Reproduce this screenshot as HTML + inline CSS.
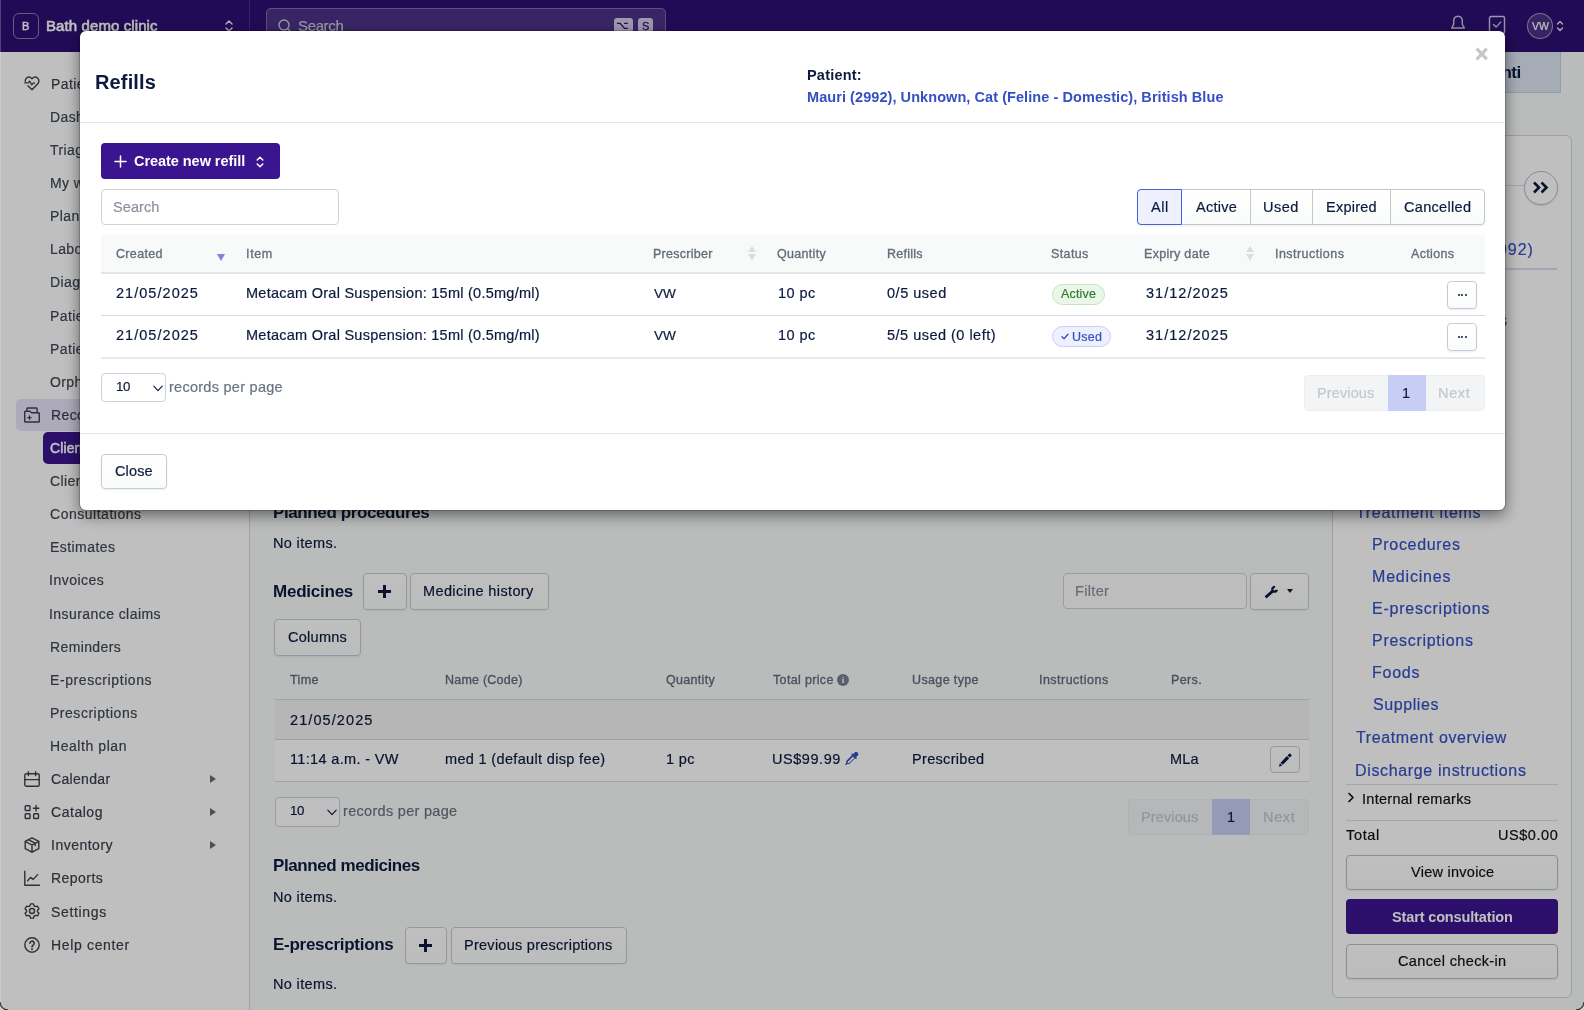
<!DOCTYPE html>
<html lang="en">
<head>
<meta charset="utf-8">
<title>Refills</title>
<style>
*{box-sizing:border-box;margin:0;padding:0}
html,body{width:1584px;height:1010px;overflow:hidden;background:#fff}
body{font-family:"Liberation Sans",sans-serif;font-size:14.5px;color:#0c1a3d;position:relative}
.abs{position:absolute}
.t{position:absolute;white-space:nowrap;line-height:20px;will-change:transform}
svg{display:block}
/* top bar */
#topbar{left:0;top:0;width:1584px;height:52px;background:#2d0f74}
#tb-div{left:249px;top:0;width:1px;height:52px;background:rgba(255,255,255,.14)}
#badgeB{left:13px;top:13px;width:26px;height:26px;border:1px solid rgba(255,255,255,.45);border-radius:6px;color:#fff;font-weight:700;font-size:11px;text-align:center;line-height:23.5px}
#searchbox{left:266px;top:8px;width:400px;height:36px;border:1px solid rgba(255,255,255,.28);border-radius:5px;background:rgba(255,255,255,.15)}
.kbd{top:18px;height:15px;background:#d5cbec;border-radius:3px;color:#301078;font-size:11px;font-weight:700;text-align:center;line-height:15px}
#avatar{left:1527px;top:13px;width:26px;height:26px;border-radius:50%;border:1px solid rgba(255,255,255,.5);background:rgba(255,255,255,.14);color:#fff;font-size:11px;text-align:center;line-height:24px;letter-spacing:.2px}
/* sidebar */
#sidebar{left:0;top:52px;width:250px;height:958px;background:#fff;border-right:1px solid #d4d7de}
.sb{color:#3f4853}
.sbi{left:24px;width:16px;height:16px;color:#3a434e;overflow:visible}
.arrow{left:209.500px;width:0;height:0;border-left:6.500px solid #636c79;border-top:4px solid transparent;border-bottom:4px solid transparent}
/* main */
#main{left:250px;top:52px;width:1334px;height:958px;background:#f9fbfb}
.h{font-weight:700;font-size:17px;color:#0c1a3d}
.btn{position:absolute;border:1px solid #c6ccd6;border-radius:4px;background:linear-gradient(#fff,#fafbfb);box-shadow:0 1px 2px rgba(12,26,61,.08);height:36.5px;text-align:center;line-height:34px;font-size:14.5px;color:#0c1a3d;white-space:nowrap}
.th{color:#636d7a;font-size:12.5px}
.lnk{color:#3550c3}
.inp{position:absolute;border:1px solid #cdd2da;border-radius:4px;background:#fff;height:36px}
.ph{color:#8a919c}
/* overlay */
#overlay{left:0;top:0;width:1584px;height:1010px;background:rgba(0,0,0,.25)}
/* modal */
#modal{left:80px;top:31px;width:1425px;height:478.5px;background:#fff;border-radius:6px;box-shadow:0 0 0 1px rgba(0,0,0,.18),0 5px 15px rgba(0,0,0,.5)}
.hr{position:absolute;height:1px;background:#e3e5e9}
.mth{color:#6a737f;font-size:12.5px;font-weight:700;top:243px}
.td{font-size:14.5px;color:#0c1a3d}
.num{letter-spacing:.9px}
.seg{position:absolute;top:0;height:36px;border:1px solid #c2c7d0;border-left:none;background:linear-gradient(#fff,#fafbfb);text-align:center;line-height:34px;font-size:14.5px;color:#0c1a3d}
.pill{position:absolute;height:21px;border-radius:11px;font-size:12.5px;line-height:19px;text-align:center;border:1px solid}
.pg{position:absolute;top:0;height:36px;line-height:36px;text-align:center;font-size:14.5px}
</style>
</head>
<body>
<div id="page" class="abs" style="left:0;top:0;width:1584px;height:1010px">
<div id="topbar" class="abs"></div>
<div id="tb-div" class="abs"></div>
<div id="badgeB" class="abs"></div>
<div class="t " style="left:22.32px;top:16.20px;font-size:11px;-webkit-text-stroke:0.45px currentColor;color:#fff">B</div>
<div class="t " style="left:45.50px;top:15.80px;font-size:15px;-webkit-text-stroke:0.6px currentColor;letter-spacing:0.097px;color:#fff">Bath demo clinic</div>
<svg class="abs" style="left:224px;top:18px" width="10" height="16" viewBox="0 0 10 16" fill="none" stroke="#e9e6f2" stroke-width="1.500" stroke-linecap="round" stroke-linejoin="round"><path d="M2 6l3-3 3 3M2 10l3 3 3-3"/></svg>
<div id="searchbox" class="abs"></div>
<svg class="abs" style="left:277px;top:18px" width="16" height="16" viewBox="0 0 16 16" fill="none" stroke="#cfc9e0" stroke-width="1.400" stroke-linecap="round"><circle cx="7" cy="7" r="5"/><path d="M10.800 10.800L14 14"/></svg>
<div class="t " style="left:298.32px;top:15.80px;font-size:15px;-webkit-text-stroke:.2px currentColor;letter-spacing:-0.360px;color:#cfc9e0">Search</div>
<div class="kbd abs" style="left:614px;width:19px"></div>
<div class="t " style="left:616.40px;top:16.00px;font-size:11px;font-weight:700;color:#2d0f74;font-family:'DejaVu Sans',sans-serif">⌥</div>
<div class="kbd abs" style="left:638px;width:15px"></div>
<div class="t " style="left:641.71px;top:16.00px;font-size:11px;-webkit-text-stroke:0.3px currentColor;color:#2d0f74">S</div>
<svg class="abs" style="left:1449px;top:14px" width="18" height="20" viewBox="0 0 18 20" fill="none" stroke="#cfc9e0" stroke-width="1.400" stroke-linejoin="round"><path d="M9 2.200c-2.600 0-4.300 2-4.300 4.600v3.600L2.600 14h12.800l-2.100-3.600V6.800c0-2.600-1.700-4.600-4.300-4.600z"/></svg>
<svg class="abs" style="left:1488px;top:15px" width="18" height="20" viewBox="0 0 18 20" fill="none" stroke="#cfc9e0" stroke-width="1.400" stroke-linejoin="round" stroke-linecap="round"><rect x="1.500" y="1.500" width="15" height="17" rx="1.500"/><path d="M5.500 9.500l2.600 2.600 4.600-5"/></svg>
<div id="avatar" class="abs"></div>
<div class="t " style="left:1531.70px;top:15.80px;font-size:10.5px;-webkit-text-stroke:.2px currentColor;letter-spacing:-0.105px;color:#fff">VW</div>
<svg class="abs" style="left:1556px;top:18px" width="8" height="16" viewBox="0 0 8 16" fill="none" stroke="#e9e6f2" stroke-width="1.400" stroke-linecap="round" stroke-linejoin="round"><path d="M1.500 6L4 3.500 6.500 6M1.500 10L4 12.500 6.500 10"/></svg>

<div id="sidebar" class="abs"></div>
<div class="abs" style="left:16px;top:399px;width:217px;height:32px;border-radius:5px;background:#e9e2fa"></div>
<div class="abs" style="left:42.500px;top:432px;width:190.500px;height:32px;border-radius:5px;background:#3b158f"></div>
<div class="t sb" style="left:50.68px;top:73.70px;font-size:14px;-webkit-text-stroke:.2px currentColor;letter-spacing:.4px;color:#3a414c">Patients</div>
<svg class="abs sbi" style="top:75.5px" viewBox="0 0 16 16" fill="none" stroke="currentColor" stroke-width="1.400" stroke-linecap="round" stroke-linejoin="round"><path d="M1.300 5.400C1.100 4.300 1.500 3.100 2.300 2.300 3.900.800 6.300.900 8 2.700 9.700.900 12.100.800 13.700 2.300c1.600 1.500 1.600 4.100-.1 5.800L8 13.800 3.900 9.700"/><path d="M.8 6.900h3.400l1.400-1.700 2.200 3.600 1.300-1.600h1.500" stroke-width="1.300"/></svg>
<div class="t sb" style="left:49.58px;top:106.81px;font-size:14px;-webkit-text-stroke:.2px currentColor;letter-spacing:.4px">Dashboard</div>
<div class="t sb" style="left:50.42px;top:139.93px;font-size:14px;-webkit-text-stroke:.2px currentColor;letter-spacing:.4px">Triage</div>
<div class="t sb" style="left:49.58px;top:173.05px;font-size:14px;-webkit-text-stroke:.2px currentColor;letter-spacing:.4px">My work</div>
<div class="t sb" style="left:49.58px;top:206.16px;font-size:14px;-webkit-text-stroke:.2px currentColor;letter-spacing:.4px">Plans</div>
<div class="t sb" style="left:49.58px;top:239.28px;font-size:14px;-webkit-text-stroke:.2px currentColor;letter-spacing:.4px">Laboratory</div>
<div class="t sb" style="left:49.58px;top:272.39px;font-size:14px;-webkit-text-stroke:.2px currentColor;letter-spacing:.4px">Diagnostics</div>
<div class="t sb" style="left:49.58px;top:305.50px;font-size:14px;-webkit-text-stroke:.2px currentColor;letter-spacing:.4px">Patient referrals</div>
<div class="t sb" style="left:49.58px;top:338.62px;font-size:14px;-webkit-text-stroke:.2px currentColor;letter-spacing:.4px">Patient reminders</div>
<div class="t sb" style="left:50.07px;top:371.74px;font-size:14px;-webkit-text-stroke:.2px currentColor;letter-spacing:.4px">Orphan samples</div>
<div class="t sb" style="left:50.68px;top:404.85px;font-size:14px;-webkit-text-stroke:.2px currentColor;letter-spacing:.4px;color:#3a414c">Records</div>
<svg class="abs sbi" style="top:406.7px" viewBox="0 0 16 16" fill="none" stroke="currentColor" stroke-width="1.400" stroke-linecap="round" stroke-linejoin="round"><path d="M1.500 4.200H5.800L7.400 5.700H14.500A.8.800 0 0 1 15.300 6.500V14.200A.8.800 0 0 1 14.500 15H1.500A.8.800 0 0 1 .7 14.200V5A.8.800 0 0 1 1.500 4.200Z"/><path d="M2.900 4V1.800A.8.800 0 0 1 3.700 1H12.300A.8.800 0 0 1 13.100 1.800V5.500"/><path d="M3.800 10.600H7.200M5.500 8.900V12.300" stroke-width="1.300"/></svg>
<div class="t sb" style="left:50.00px;top:437.97px;font-size:14px;-webkit-text-stroke:0.55px currentColor;color:#fff;letter-spacing:.1px">Clients &amp; patients</div>
<div class="t sb" style="left:50.00px;top:471.08px;font-size:14px;-webkit-text-stroke:.2px currentColor;letter-spacing:.4px">Client communication</div>
<div class="t sb" style="left:50.00px;top:504.20px;font-size:14px;-webkit-text-stroke:.2px currentColor;letter-spacing:0.521px;">Consultations</div>
<div class="t sb" style="left:49.58px;top:537.31px;font-size:14px;-webkit-text-stroke:.2px currentColor;letter-spacing:0.444px;">Estimates</div>
<div class="t sb" style="left:49.44px;top:570.43px;font-size:14px;-webkit-text-stroke:.2px currentColor;letter-spacing:0.496px;">Invoices</div>
<div class="t sb" style="left:49.44px;top:603.54px;font-size:14px;-webkit-text-stroke:.2px currentColor;letter-spacing:0.432px;">Insurance claims</div>
<div class="t sb" style="left:49.58px;top:636.66px;font-size:14px;-webkit-text-stroke:.2px currentColor;letter-spacing:0.377px;">Reminders</div>
<div class="t sb" style="left:49.58px;top:669.77px;font-size:14px;-webkit-text-stroke:.2px currentColor;letter-spacing:0.588px;">E-prescriptions</div>
<div class="t sb" style="left:49.58px;top:702.89px;font-size:14px;-webkit-text-stroke:.2px currentColor;letter-spacing:0.524px;">Prescriptions</div>
<div class="t sb" style="left:49.58px;top:736.00px;font-size:14px;-webkit-text-stroke:.2px currentColor;letter-spacing:0.562px;">Health plan</div>
<div class="t sb" style="left:51.10px;top:769.12px;font-size:14px;-webkit-text-stroke:.2px currentColor;letter-spacing:0.324px;color:#3a414c">Calendar</div>
<svg class="abs sbi" style="top:770.9px" viewBox="0 0 16 16" fill="none" stroke="currentColor" stroke-width="1.400" stroke-linecap="round" stroke-linejoin="round"><rect x=".8" y="2.800" width="14.400" height="12.400" rx="1.500"/><path d="M.8 8.600H15.200M4.400.8V4.600M11.600.8V4.600"/></svg>
<div class="abs arrow" style="top:775.1px"></div>
<div class="t sb" style="left:51.10px;top:802.23px;font-size:14px;-webkit-text-stroke:.2px currentColor;letter-spacing:0.535px;color:#3a414c">Catalog</div>
<svg class="abs sbi" style="top:804.0px" viewBox="0 0 16 16" fill="none" stroke="currentColor" stroke-width="1.400" stroke-linecap="round" stroke-linejoin="round"><rect x="1.200" y="1.700" width="4.800" height="4.800" rx=".8"/><rect x="1.200" y="9.700" width="4.800" height="4.800" rx=".8"/><rect x="9.700" y="9.700" width="4.800" height="4.800" rx=".8"/><path d="M12.100 1.500V6.900M9.400 4.200H14.800"/></svg>
<div class="abs arrow" style="top:808.2px"></div>
<div class="t sb" style="left:50.54px;top:835.35px;font-size:14px;-webkit-text-stroke:.2px currentColor;letter-spacing:0.494px;color:#3a414c">Inventory</div>
<svg class="abs sbi" style="top:837.1px" viewBox="0 0 16 16" fill="none" stroke="currentColor" stroke-width="1.400" stroke-linecap="round" stroke-linejoin="round"><path d="M8 .8L14.800 4.400V11.600L8 15.200 1.200 11.600V4.400Z"/><path d="M1.500 4.600L8 8 14.500 4.600M8 8V15.200M4.500 2.700L11.300 6.300V8.600"/></svg>
<div class="abs arrow" style="top:841.3px"></div>
<div class="t sb" style="left:50.68px;top:868.46px;font-size:14px;-webkit-text-stroke:.2px currentColor;letter-spacing:0.468px;color:#3a414c">Reports</div>
<svg class="abs sbi" style="top:870.3px" viewBox="0 0 16 16" fill="none" stroke="currentColor" stroke-width="1.400" stroke-linecap="round" stroke-linejoin="round"><path d="M.8 1.200V15.200H15.500"/><path d="M3.600 10.800L6.600 7.400 9.200 9.400 13.600 4.600"/></svg>
<div class="t sb" style="left:51.17px;top:901.58px;font-size:14px;-webkit-text-stroke:.2px currentColor;letter-spacing:0.659px;color:#3a414c">Settings</div>
<svg class="abs sbi" style="top:903.4px" viewBox="0 0 16 16" fill="none" stroke="currentColor" stroke-width="1.400" stroke-linecap="round" stroke-linejoin="round"><circle cx="8" cy="8" r="2.500"/><path d="M5.94 2.90 L6.48 0.86 L9.52 0.86 L10.06 2.90 L11.39 3.67 L13.42 3.12 L14.94 5.74 L13.45 7.23 L13.45 8.77 L14.94 10.26 L13.42 12.88 L11.39 12.33 L10.06 13.10 L9.52 15.14 L6.48 15.14 L5.94 13.10 L4.61 12.33 L2.58 12.88 L1.06 10.26 L2.55 8.77 L2.55 7.23 L1.06 5.74 L2.58 3.12 L4.61 3.67Z"/></svg>
<div class="t sb" style="left:50.68px;top:934.69px;font-size:14px;-webkit-text-stroke:.2px currentColor;letter-spacing:0.662px;color:#3a414c">Help center</div>
<svg class="abs sbi" style="top:936.5px" viewBox="0 0 16 16" fill="none" stroke="currentColor" stroke-width="1.400" stroke-linecap="round" stroke-linejoin="round"><circle cx="8" cy="8" r="7.200"/><path d="M5.900 6.300a2.150 2.150 0 1 1 3.200 1.900c-.75.450-1.100.850-1.100 1.700" stroke-width="1.600"/><circle cx="8" cy="12.200" r=".95" fill="currentColor" stroke="none"/></svg>

<div id="main" class="abs"></div>
<div class="abs" style="left:1300px;top:52px;width:261px;height:41px;background:#dde6f3;border:1px solid #c3d0e6;border-top:none"></div>
<div class="t " style="left:1455.58px;top:62.50px;font-size:17px;font-weight:700;letter-spacing:-0.531px;color:#0c1a3d">Appointi</div>
<div class="t h" style="left:273.14px;top:502.50px;font-size:17px;font-weight:700;letter-spacing:-0.391px;">Planned procedures</div>
<div class="t " style="left:273.09px;top:532.50px;font-size:14.5px;-webkit-text-stroke:.2px currentColor;letter-spacing:0.350px;">No items.</div>
<div class="t h" style="left:273.14px;top:581.50px;font-size:17px;font-weight:700;letter-spacing:-0.237px;">Medicines</div>
<div class="btn" style="left:363px;top:573px;width:43.500px"></div>
<div class="abs" style="left:378.0px;top:590.0px;width:13px;height:3px;background:#0c1a3d"></div><div class="abs" style="left:383.0px;top:585.0px;width:3px;height:13px;background:#0c1a3d"></div>
<div class="btn" style="left:410px;top:573px;width:138.500px"></div>
<div class="t " style="left:423.34px;top:581.30px;font-size:14.5px;-webkit-text-stroke:.2px currentColor;letter-spacing:0.367px;">Medicine history</div>
<div class="inp" style="left:1063px;top:573px;width:183.500px;background:#fdfdfe"></div>
<div class="t ph" style="left:1074.84px;top:581.30px;font-size:14.5px;-webkit-text-stroke:.2px currentColor;letter-spacing:0.343px;">Filter</div>
<div class="btn" style="left:1250px;top:573px;width:59px"></div>
<svg class="abs" style="left:1263px;top:584px" width="16" height="16" viewBox="0 0 16 16" fill="none" stroke="#0c1a3d"><path d="M2.600 13.400L9.700 7.100" stroke-width="2.800"/><path d="M13.850 5.700A2.300 2.300 0 1 1 12 3.040" stroke-width="2.300"/></svg>
<div class="abs" style="left:1286.700px;top:589.300px;width:0;height:0;border-top:4.600px solid #0c1a3d;border-left:3.800px solid transparent;border-right:3.800px solid transparent"></div>
<div class="btn" style="left:274px;top:619px;width:86.500px"></div>
<div class="t " style="left:287.77px;top:627.30px;font-size:14.5px;-webkit-text-stroke:.2px currentColor;letter-spacing:0.272px;">Columns</div>
<div class="t th" style="left:289.75px;top:670.25px;font-size:12.5px;-webkit-text-stroke:0.35px currentColor;letter-spacing:0.346px;">Time</div>
<div class="t th" style="left:445.25px;top:670.25px;font-size:12.5px;-webkit-text-stroke:0.35px currentColor;letter-spacing:0.229px;">Name (Code)</div>
<div class="t th" style="left:665.69px;top:670.25px;font-size:12.5px;-webkit-text-stroke:0.35px currentColor;letter-spacing:0.300px;">Quantity</div>
<div class="t th" style="left:773.00px;top:670.25px;font-size:12.5px;-webkit-text-stroke:0.35px currentColor;letter-spacing:0.341px;">Total price</div>
<div class="t th" style="left:912.31px;top:670.25px;font-size:12.5px;-webkit-text-stroke:0.35px currentColor;letter-spacing:0.365px;">Usage type</div>
<div class="t th" style="left:1038.88px;top:670.25px;font-size:12.5px;-webkit-text-stroke:0.35px currentColor;letter-spacing:0.475px;">Instructions</div>
<div class="t th" style="left:1170.50px;top:670.25px;font-size:12.5px;-webkit-text-stroke:0.35px currentColor;letter-spacing:0.384px;">Pers.</div>
<div class="abs" style="left:836.500px;top:673.500px;width:12px;height:12px;border-radius:50%;background:#768090;color:#fff;font-size:9px;font-weight:700;line-height:12px;text-align:center;font-family:'Liberation Serif',serif;will-change:transform">i</div>
<div class="abs" style="left:274.500px;top:698.500px;width:1034.500px;height:1.500px;background:#d3d7df"></div>
<div class="abs" style="left:274.500px;top:700px;width:1034.500px;height:39.500px;background:#f3f3f4;border-bottom:1px solid #d3d7df"></div>
<div class="t td" style="left:289.77px;top:709.50px;font-size:14.5px;-webkit-text-stroke:.2px currentColor;letter-spacing:1.092px;">21/05/2025</div>
<div class="abs" style="left:274.500px;top:739.500px;width:1034.500px;height:42px;background:#fff;border-bottom:1.500px solid #d3d7df"></div>
<div class="t td" style="left:289.66px;top:748.75px;font-size:14.5px;-webkit-text-stroke:.2px currentColor;letter-spacing:0.340px;">11:14 a.m. - VW</div>
<div class="t td" style="left:445.31px;top:748.75px;font-size:14.5px;-webkit-text-stroke:.2px currentColor;letter-spacing:0.338px;">med 1 (default disp fee)</div>
<div class="t td" style="left:666.41px;top:748.75px;font-size:14.5px;-webkit-text-stroke:.2px currentColor;letter-spacing:0.382px;">1 pc</div>
<div class="t td" style="left:772.16px;top:748.75px;font-size:14.5px;-webkit-text-stroke:.2px currentColor;letter-spacing:0.555px;">US$99.99</div>
<svg class="abs" style="left:845px;top:752px" width="15" height="15" viewBox="0 0 16 16"><path fill="#3550c3" d="M13.350.65a2.200 2.200 0 0 0-3.120 0L8.500 2.380l-.53-.53a.75.750 0 0 0-1.060 1.060l.5.500-5.600 5.600a1.500 1.500 0 0 0-.42.850l-.3 2.100-.8 1.200a.5.500 0 0 0 .7.700l1.200-.8 2.100-.3a1.500 1.500 0 0 0 .85-.42l5.600-5.600.5.500a.75.750 0 0 0 1.060-1.060l-.53-.53 1.730-1.730a2.200 2.200 0 0 0 0-3.120zM4.370 11.630a.5.500 0 0 1-.280.140l-1.330.19.190-1.330a.5.500 0 0 1 .14-.28L8.470 4.970l1.480 1.480-5.580 5.180z"/></svg>
<div class="t td" style="left:912.09px;top:748.75px;font-size:14.5px;-webkit-text-stroke:.2px currentColor;letter-spacing:0.313px;">Prescribed</div>
<div class="t td" style="left:1170.34px;top:748.75px;font-size:14.5px;-webkit-text-stroke:.2px currentColor;letter-spacing:0.118px;">MLa</div>
<div class="btn" style="left:1270px;top:746px;width:30px;height:27px;border-radius:4px;box-shadow:none"></div>
<svg class="abs" style="left:1270px;top:746px" width="30" height="27" viewBox="1270 746 30 27"><g transform="translate(1285 760.300) rotate(-46)" fill="#0c1a3d"><path d="M-8.900 0L-5.600-1.600V1.600Z"/><rect x="-4.800" y="-1.600" width="9.200" height="3.200"/><rect x="5.200" y="-1.600" width="3.200" height="3.200" rx=".9"/></g></svg>
<div class="inp" style="left:274.5px;top:796.5px;width:65.5px;height:30.0px"></div><div class="t td" style="left:289.90px;top:801.30px;font-size:13.3px;-webkit-text-stroke:.2px currentColor;letter-spacing:-0.400px;">10</div><svg class="abs" style="left:326.5px;top:808.5px" width="10" height="7" viewBox="0 0 10 7" fill="none" stroke="#0c1a3d" stroke-width="1.150" stroke-linecap="round" stroke-linejoin="round"><path d="M.8 1.200l4.200 4.400 4.200-4.400"/></svg>
<div class="t " style="left:342.56px;top:800.75px;font-size:14.5px;-webkit-text-stroke:.2px currentColor;letter-spacing:0.300px;color:#6a737f">records per page</div>
<div class="abs" style="left:1128.0px;top:798.5px;width:181px;height:36px;border-radius:4px;background:#f3f4f6;border:1px solid #eceef1"></div><div class="abs" style="left:1212.3px;top:798.5px;width:38px;height:36px;background:#c7cef5"></div><div class="t " style="left:1141.14px;top:806.50px;font-size:14.5px;-webkit-text-stroke:.2px currentColor;letter-spacing:0.123px;color:#c3c7ce">Previous</div><div class="t " style="left:1226.71px;top:806.50px;font-size:14.5px;-webkit-text-stroke:.2px currentColor;color:#0c1a3d">1</div><div class="t " style="left:1262.84px;top:806.50px;font-size:14.5px;-webkit-text-stroke:.2px currentColor;letter-spacing:0.654px;color:#c3c7ce">Next</div>
<div class="t h" style="left:273.14px;top:856.00px;font-size:17px;font-weight:700;letter-spacing:-0.420px;">Planned medicines</div>
<div class="t " style="left:273.09px;top:886.75px;font-size:14.5px;-webkit-text-stroke:.2px currentColor;letter-spacing:0.350px;">No items.</div>
<div class="t h" style="left:273.14px;top:935.00px;font-size:17px;font-weight:700;letter-spacing:-0.278px;">E-prescriptions</div>
<div class="btn" style="left:404.500px;top:927px;width:42px"></div>
<div class="abs" style="left:418.5px;top:943.5px;width:13px;height:3px;background:#0c1a3d"></div><div class="abs" style="left:423.5px;top:938.5px;width:3px;height:13px;background:#0c1a3d"></div>
<div class="btn" style="left:450.500px;top:927px;width:176px"></div>
<div class="t " style="left:463.84px;top:934.80px;font-size:14.5px;-webkit-text-stroke:.2px currentColor;letter-spacing:0.266px;">Previous prescriptions</div>
<div class="t " style="left:273.09px;top:973.75px;font-size:14.5px;-webkit-text-stroke:.2px currentColor;letter-spacing:0.350px;">No items.</div>

<div class="abs" style="left:1332px;top:134.500px;width:240px;height:863px;border:1px solid #cfd3db;border-radius:6px;background:#fff"></div>
<div class="abs" style="left:1346px;top:185px;width:180px;height:1px;background:#d9dce3"></div>
<div class="abs" style="left:1523.500px;top:171px;width:34px;height:34px;border-radius:50%;border:1px solid #b9bec9;background:#fff;box-shadow:0 1px 2px rgba(12,26,61,.12)"></div>
<svg class="abs" style="left:1532px;top:181px" width="17" height="13" viewBox="0 0 17 13" fill="none" stroke="#0c1a3d" stroke-width="2.600" stroke-linejoin="miter"><path d="M2 1.500l5 5-5 5M9.500 1.500l5 5-5 5"/></svg>
<div class="t lnk" style="left:1431.72px;top:240.00px;font-size:16px;-webkit-text-stroke:.2px currentColor;letter-spacing:0.920px;">Mauri (2992)</div>
<div class="abs" style="left:1346px;top:268px;width:211px;height:2px;background:#dcdef2"></div>
<div class="t lnk" style="left:1451.20px;top:311.00px;font-size:16px;-webkit-text-stroke:.2px currentColor;letter-spacing:1.180px;">Clients</div>
<div class="t lnk" style="left:1356.18px;top:503.30px;font-size:16px;-webkit-text-stroke:.2px currentColor;letter-spacing:0.680px;">Treatment items</div>
<div class="t lnk" style="left:1372.02px;top:535.20px;font-size:16px;-webkit-text-stroke:.2px currentColor;letter-spacing:0.678px;">Procedures</div>
<div class="t lnk" style="left:1372.02px;top:567.10px;font-size:16px;-webkit-text-stroke:.2px currentColor;letter-spacing:0.805px;">Medicines</div>
<div class="t lnk" style="left:1372.02px;top:599.00px;font-size:16px;-webkit-text-stroke:.2px currentColor;letter-spacing:0.766px;">E-prescriptions</div>
<div class="t lnk" style="left:1372.02px;top:631.20px;font-size:16px;-webkit-text-stroke:.2px currentColor;letter-spacing:0.705px;">Prescriptions</div>
<div class="t lnk" style="left:1372.02px;top:663.10px;font-size:16px;-webkit-text-stroke:.2px currentColor;letter-spacing:0.740px;">Foods</div>
<div class="t lnk" style="left:1372.58px;top:695.00px;font-size:16px;-webkit-text-stroke:.2px currentColor;letter-spacing:0.574px;">Supplies</div>
<div class="t lnk" style="left:1356.18px;top:728.30px;font-size:16px;-webkit-text-stroke:.2px currentColor;letter-spacing:0.618px;">Treatment overview</div>
<div class="t lnk" style="left:1355.22px;top:760.50px;font-size:16px;-webkit-text-stroke:.2px currentColor;letter-spacing:0.643px;">Discharge instructions</div>
<div class="abs" style="left:1346px;top:783.500px;width:211.500px;height:1px;background:#d9dce3"></div>
<svg class="abs" style="left:1346.500px;top:792px" width="8" height="11" viewBox="0 0 8 11" fill="none" stroke="#111" stroke-width="1.700" stroke-linecap="round" stroke-linejoin="round"><path d="M2 1.500l4 4-4 4"/></svg>
<div class="t " style="left:1361.69px;top:789.00px;font-size:14.5px;-webkit-text-stroke:.2px currentColor;letter-spacing:0.277px;color:#111">Internal remarks</div>
<div class="abs" style="left:1346px;top:819.500px;width:211.500px;height:1px;background:#d9dce3"></div>
<div class="t " style="left:1346.01px;top:825.00px;font-size:14.5px;-webkit-text-stroke:.2px currentColor;letter-spacing:0.666px;color:#111">Total</div>
<div class="t " style="left:1497.91px;top:825.00px;font-size:14.5px;-webkit-text-stroke:.2px currentColor;letter-spacing:0.548px;color:#111">US$0.00</div>
<div class="btn" style="left:1346px;top:854.500px;width:211.500px;height:35px;border-color:#b9bec9"></div>
<div class="t " style="left:1410.50px;top:862.00px;font-size:14.5px;-webkit-text-stroke:.2px currentColor;letter-spacing:0.259px;color:#111">View invoice</div>
<div class="abs" style="left:1346px;top:899px;width:211.500px;height:35px;border-radius:4px;background:#3b158f"></div>
<div class="t " style="left:1391.64px;top:906.50px;font-size:14.5px;font-weight:700;letter-spacing:-0.142px;color:#fff">Start consultation</div>
<div class="btn" style="left:1346px;top:943.500px;width:211.500px;height:35px;border-color:#b9bec9"></div>
<div class="t " style="left:1397.78px;top:951.00px;font-size:14.5px;-webkit-text-stroke:.2px currentColor;letter-spacing:0.359px;color:#111">Cancel check-in</div>

</div>
<div id="overlay" class="abs"></div>
<div id="modal" class="abs"></div>
<div class="t " style="left:95.00px;top:69.75px;font-size:20px;line-height:24px;font-weight:700;letter-spacing:0.142px;color:#0c1a3d">Refills</div>
<div class="t " style="left:1475.28px;top:42.40px;font-size:23px;line-height:24px;font-weight:700;color:#c6c6c6;-webkit-text-stroke:.5px #c6c6c6">×</div>
<div class="t " style="left:806.66px;top:65.00px;font-size:14.5px;font-weight:700;letter-spacing:0.201px;color:#0c1a3d">Patient:</div>
<div class="t " style="left:806.66px;top:86.50px;font-size:14.5px;font-weight:700;letter-spacing:0.067px;color:#3550c3">Mauri (2992), Unknown, Cat (Feline - Domestic), British Blue</div>
<div class="hr" style="left:80px;top:122px;width:1425px"></div>
<div class="abs" style="left:100.500px;top:143px;width:179px;height:36px;border-radius:4px;background:#3b158f"></div>
<svg class="abs" style="left:114px;top:155px" width="13" height="13" viewBox="0 0 13 13" stroke="#fff" stroke-width="1.500" stroke-linecap="round"><path d="M6.500 1v11M1 6.500h11"/></svg>
<div class="t " style="left:134.42px;top:151.25px;font-size:14.5px;font-weight:700;letter-spacing:-0.051px;color:#fff">Create new refill</div>
<svg class="abs" style="left:255px;top:153.500px" width="10" height="16" viewBox="0 0 10 16" fill="none" stroke="#fff" stroke-width="1.500" stroke-linecap="round" stroke-linejoin="round"><path d="M2.200 6L5 3.200 7.800 6M2.200 10L5 12.800 7.800 10"/></svg>
<div class="inp" style="left:100.500px;top:189.250px;width:238px;height:35.500px"></div>
<div class="t ph" style="left:113.10px;top:197.00px;font-size:14.5px;-webkit-text-stroke:.2px currentColor;letter-spacing:0.096px;">Search</div>
<div class="abs" style="left:1136.500px;top:189.250px;width:348.250px;height:35.500px;border:1px solid #c2c7d0;border-radius:4px;background:linear-gradient(#fff,#fafbfb);box-shadow:0 1px 2px rgba(12,26,61,.08)"></div>
<div class="abs" style="left:1249.75px;top:190px;width:1px;height:34px;background:#c2c7d0"></div>
<div class="abs" style="left:1311.75px;top:190px;width:1px;height:34px;background:#c2c7d0"></div>
<div class="abs" style="left:1389.50px;top:190px;width:1px;height:34px;background:#c2c7d0"></div>
<div class="abs" style="left:1136.500px;top:189.250px;width:45.500px;height:35.500px;border:1.500px solid #4a61d6;border-radius:4px 0 0 4px;background:#eef0fd"></div>
<div class="t td" style="left:1150.75px;top:197.00px;font-size:14.5px;-webkit-text-stroke:.2px currentColor;letter-spacing:0.562px;">All</div>
<div class="t td" style="left:1195.75px;top:197.00px;font-size:14.5px;-webkit-text-stroke:.2px currentColor;letter-spacing:0.248px;">Active</div>
<div class="t td" style="left:1263.41px;top:197.00px;font-size:14.5px;-webkit-text-stroke:.2px currentColor;letter-spacing:0.483px;">Used</div>
<div class="t td" style="left:1325.59px;top:197.00px;font-size:14.5px;-webkit-text-stroke:.2px currentColor;letter-spacing:0.246px;">Expired</div>
<div class="t td" style="left:1403.53px;top:197.00px;font-size:14.5px;-webkit-text-stroke:.2px currentColor;letter-spacing:0.312px;">Cancelled</div>
<div class="abs" style="left:100.500px;top:235px;width:1384.250px;height:37px;background:#f8fafa"></div>
<div class="abs" style="left:100.500px;top:271.500px;width:1384.250px;height:2px;background:#e2e5ea"></div>
<div class="t " style="left:115.62px;top:243.90px;font-size:12.5px;-webkit-text-stroke:0.35px currentColor;letter-spacing:0.340px;color:#646e7a">Created</div>
<div class="t " style="left:245.88px;top:243.90px;font-size:12.5px;-webkit-text-stroke:0.35px currentColor;letter-spacing:0.658px;color:#646e7a">Item</div>
<div class="t " style="left:652.75px;top:243.90px;font-size:12.5px;-webkit-text-stroke:0.35px currentColor;letter-spacing:0.282px;color:#646e7a">Prescriber</div>
<div class="t " style="left:776.94px;top:243.90px;font-size:12.5px;-webkit-text-stroke:0.35px currentColor;letter-spacing:0.300px;color:#646e7a">Quantity</div>
<div class="t " style="left:886.50px;top:243.90px;font-size:12.5px;-webkit-text-stroke:0.35px currentColor;letter-spacing:0.246px;color:#646e7a">Refills</div>
<div class="t " style="left:1050.94px;top:243.90px;font-size:12.5px;-webkit-text-stroke:0.35px currentColor;letter-spacing:0.383px;color:#646e7a">Status</div>
<div class="t " style="left:1144.00px;top:243.90px;font-size:12.5px;-webkit-text-stroke:0.35px currentColor;letter-spacing:0.310px;color:#646e7a">Expiry date</div>
<div class="t " style="left:1274.88px;top:243.90px;font-size:12.5px;-webkit-text-stroke:0.35px currentColor;letter-spacing:0.452px;color:#646e7a">Instructions</div>
<div class="t " style="left:1410.75px;top:243.90px;font-size:12.5px;-webkit-text-stroke:0.35px currentColor;letter-spacing:0.340px;color:#646e7a">Actions</div>
<div class="abs" style="left:216.8px;top:254.2px;width:0;height:0;border-top:7.5px solid #8280e0;border-left:4.5px solid transparent;border-right:4.5px solid transparent"></div>
<div class="abs" style="left:747.9px;top:246.4px;width:0;height:0;border-bottom:6.9px solid #dcdddf;border-left:4.1px solid transparent;border-right:4.1px solid transparent"></div>
<div class="abs" style="left:747.9px;top:254.2px;width:0;height:0;border-top:7.3px solid #dcdddf;border-left:4.1px solid transparent;border-right:4.1px solid transparent"></div>
<div class="abs" style="left:1246.4px;top:246.4px;width:0;height:0;border-bottom:6.9px solid #dcdddf;border-left:4.1px solid transparent;border-right:4.1px solid transparent"></div>
<div class="abs" style="left:1246.4px;top:254.2px;width:0;height:0;border-top:7.3px solid #dcdddf;border-left:4.1px solid transparent;border-right:4.1px solid transparent"></div>
<div class="abs" style="left:100.500px;top:315px;width:1384.250px;height:1px;background:#d6dae4"></div>
<div class="abs" style="left:100.500px;top:357px;width:1384.250px;height:2px;background:#e6e8ed"></div>
<div class="t td" style="left:115.78px;top:283.00px;font-size:14.5px;-webkit-text-stroke:.2px currentColor;letter-spacing:1.037px;">21/05/2025</div>
<div class="t td" style="left:245.84px;top:283.00px;font-size:14.5px;-webkit-text-stroke:.2px currentColor;letter-spacing:0.255px;">Metacam Oral Suspension: 15ml (0.5mg/ml)</div>
<div class="t td" style="left:653.75px;top:283.50px;font-size:13.6px;-webkit-text-stroke:.2px currentColor;">VW</div>
<div class="t td" style="left:777.66px;top:283.00px;font-size:14.5px;-webkit-text-stroke:.2px currentColor;letter-spacing:0.462px;">10 pc</div>
<div class="t td" style="left:886.99px;top:283.00px;font-size:14.5px;-webkit-text-stroke:.2px currentColor;letter-spacing:0.517px;">0/5 used</div>
<div class="t td" style="left:1145.79px;top:283.00px;font-size:14.5px;-webkit-text-stroke:.2px currentColor;letter-spacing:1.035px;">31/12/2025</div>
<div class="btn" style="left:1447px;top:280.5px;width:30px;height:28px"></div>
<div class="abs" style="left:1457.5px;top:293.5px;width:2px;height:2px;border-radius:50%;background:#0c1a3d"></div>
<div class="abs" style="left:1461.2px;top:293.5px;width:2px;height:2px;border-radius:50%;background:#0c1a3d"></div>
<div class="abs" style="left:1464.9px;top:293.5px;width:2px;height:2px;border-radius:50%;background:#0c1a3d"></div>
<div class="t td" style="left:115.78px;top:325.00px;font-size:14.5px;-webkit-text-stroke:.2px currentColor;letter-spacing:1.037px;">21/05/2025</div>
<div class="t td" style="left:245.84px;top:325.00px;font-size:14.5px;-webkit-text-stroke:.2px currentColor;letter-spacing:0.255px;">Metacam Oral Suspension: 15ml (0.5mg/ml)</div>
<div class="t td" style="left:653.75px;top:325.50px;font-size:13.6px;-webkit-text-stroke:.2px currentColor;">VW</div>
<div class="t td" style="left:777.66px;top:325.00px;font-size:14.5px;-webkit-text-stroke:.2px currentColor;letter-spacing:0.462px;">10 pc</div>
<div class="t td" style="left:886.92px;top:325.00px;font-size:14.5px;-webkit-text-stroke:.2px currentColor;letter-spacing:0.486px;">5/5 used (0 left)</div>
<div class="t td" style="left:1145.79px;top:325.00px;font-size:14.5px;-webkit-text-stroke:.2px currentColor;letter-spacing:1.035px;">31/12/2025</div>
<div class="btn" style="left:1447px;top:322.5px;width:30px;height:28px"></div>
<div class="abs" style="left:1457.5px;top:335.5px;width:2px;height:2px;border-radius:50%;background:#0c1a3d"></div>
<div class="abs" style="left:1461.2px;top:335.5px;width:2px;height:2px;border-radius:50%;background:#0c1a3d"></div>
<div class="abs" style="left:1464.9px;top:335.5px;width:2px;height:2px;border-radius:50%;background:#0c1a3d"></div>
<div class="pill" style="left:1051.500px;top:283.500px;width:53.250px;background:#eaf6e7;border-color:#c5e4bf"></div>
<div class="t " style="left:1060.75px;top:284.25px;font-size:12.5px;-webkit-text-stroke:.2px currentColor;letter-spacing:0.170px;color:#2f7a32">Active</div>
<div class="pill" style="left:1051.500px;top:326px;width:59.250px;background:#eef1fd;border-color:#c5cdf5"></div>
<svg class="abs" style="left:1060.500px;top:333px" width="8" height="7" viewBox="0 0 8 7" fill="none" stroke="#3550c3" stroke-width="1.300" stroke-linecap="round" stroke-linejoin="round"><path d="M1 3.800l2 2 4-4.600"/></svg>
<div class="t " style="left:1071.81px;top:326.50px;font-size:12.5px;-webkit-text-stroke:.2px currentColor;letter-spacing:0.283px;color:#3550c3">Used</div>
<div class="inp" style="left:100.5px;top:372.5px;width:65.2px;height:29.8px"></div><div class="t td" style="left:115.90px;top:377.30px;font-size:13.3px;-webkit-text-stroke:.2px currentColor;letter-spacing:-0.400px;">10</div><svg class="abs" style="left:152.5px;top:384.5px" width="10" height="7" viewBox="0 0 10 7" fill="none" stroke="#0c1a3d" stroke-width="1.150" stroke-linecap="round" stroke-linejoin="round"><path d="M.8 1.200l4.200 4.400 4.200-4.400"/></svg>
<div class="t " style="left:169.06px;top:376.75px;font-size:14.5px;-webkit-text-stroke:.2px currentColor;letter-spacing:0.267px;color:#6a737f">records per page</div>
<div class="abs" style="left:1303.5px;top:374.5px;width:181px;height:36px;border-radius:4px;background:#f3f4f6;border:1px solid #eceef1"></div><div class="abs" style="left:1387.8px;top:374.5px;width:38px;height:36px;background:#c7cef5"></div><div class="t " style="left:1316.64px;top:382.50px;font-size:14.5px;-webkit-text-stroke:.2px currentColor;letter-spacing:0.123px;color:#c3c7ce">Previous</div><div class="t " style="left:1402.21px;top:382.50px;font-size:14.5px;-webkit-text-stroke:.2px currentColor;color:#0c1a3d">1</div><div class="t " style="left:1438.34px;top:382.50px;font-size:14.5px;-webkit-text-stroke:.2px currentColor;letter-spacing:0.654px;color:#c3c7ce">Next</div>
<div class="hr" style="left:80px;top:432.500px;width:1425px"></div>
<div class="btn" style="left:100.500px;top:453.750px;width:66px;height:35.500px"></div>
<div class="t td" style="left:114.68px;top:461.25px;font-size:14.5px;-webkit-text-stroke:.2px currentColor;letter-spacing:0.152px;">Close</div>

<div class="abs" style="left:0;top:0;width:1px;height:1010px;background:rgba(255,255,255,.22)"></div>
<svg class="abs" style="left:0;top:1002px" width="8" height="8" viewBox="0 0 8 8"><path d="M0 0A8 8 0 0 0 8 8H0Z" fill="#cfcfcf"/><path d="M0 0A8 8 0 0 0 8 8" fill="none" stroke="#3a3a3a" stroke-width="1.300"/></svg>
<svg class="abs" style="left:1576px;top:1002px" width="8" height="8" viewBox="0 0 8 8"><path d="M8 0A8 8 0 0 1 0 8H8Z" fill="#cfcfcf"/><path d="M8 0A8 8 0 0 1 0 8" fill="none" stroke="#3a3a3a" stroke-width="1.300"/></svg>
</body>
</html>
